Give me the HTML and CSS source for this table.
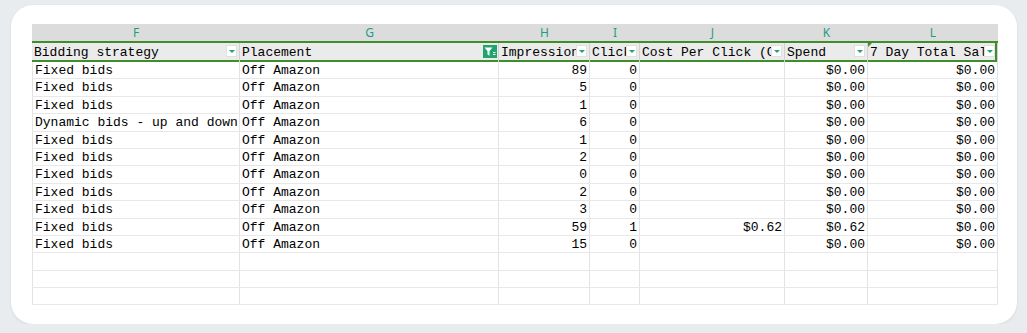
FILE: index.html
```html
<!doctype html>
<html>
<head>
    <meta charset="utf-8">
    <title>Sheet</title>
    <link rel="stylesheet" href="styles.css">
</head>
<body>

<div class="card">
    <div class="sheet">
        <div class="letters">
            <div>F</div><div>G</div><div>H</div><div>I</div><div>J</div><div>K</div><div>L</div>
        </div>

        <div class="head">
            <div class="hcell"><span>Bidding strategy</span><i class="drop"></i></div>
            <div class="hcell wide"><span>Placement</span><i class="filter">
                <svg width="14" height="13" viewBox="0 0 14 13"><path d="M1.5 2.5h8l-3 3.6v4.6l-2-1.1V6.1z" fill="#fff"/><path d="M10 7.5h2.5M10 9.5h2.5" stroke="#fff" stroke-width="1"/></svg>
            </i></div>
            <div class="hcell"><span>Impressions</span><i class="drop"></i></div>
            <div class="hcell"><span>Clicks</span><i class="drop"></i></div>
            <div class="hcell"><span>Cost Per Click (CPC)</span><i class="drop"></i></div>
            <div class="hcell"><span>Spend</span><i class="drop"></i></div>
            <div class="hcell sel"><span>7 Day Total Sales</span><i class="drop"></i></div>
        </div>

        <div class="rows">
            <div class="row"><div>Fixed bids</div><div>Off Amazon</div><div class="num">89</div><div class="num">0</div><div class="num"></div><div class="num">$0.00</div><div class="num">$0.00</div></div>
            <div class="row"><div>Fixed bids</div><div>Off Amazon</div><div class="num">5</div><div class="num">0</div><div class="num"></div><div class="num">$0.00</div><div class="num">$0.00</div></div>
            <div class="row"><div>Fixed bids</div><div>Off Amazon</div><div class="num">1</div><div class="num">0</div><div class="num"></div><div class="num">$0.00</div><div class="num">$0.00</div></div>
            <div class="row"><div>Dynamic bids - up and down</div><div>Off Amazon</div><div class="num">6</div><div class="num">0</div><div class="num"></div><div class="num">$0.00</div><div class="num">$0.00</div></div>
            <div class="row"><div>Fixed bids</div><div>Off Amazon</div><div class="num">1</div><div class="num">0</div><div class="num"></div><div class="num">$0.00</div><div class="num">$0.00</div></div>
            <div class="row"><div>Fixed bids</div><div>Off Amazon</div><div class="num">2</div><div class="num">0</div><div class="num"></div><div class="num">$0.00</div><div class="num">$0.00</div></div>
            <div class="row"><div>Fixed bids</div><div>Off Amazon</div><div class="num">0</div><div class="num">0</div><div class="num"></div><div class="num">$0.00</div><div class="num">$0.00</div></div>
            <div class="row"><div>Fixed bids</div><div>Off Amazon</div><div class="num">2</div><div class="num">0</div><div class="num"></div><div class="num">$0.00</div><div class="num">$0.00</div></div>
            <div class="row"><div>Fixed bids</div><div>Off Amazon</div><div class="num">3</div><div class="num">0</div><div class="num"></div><div class="num">$0.00</div><div class="num">$0.00</div></div>
            <div class="row"><div>Fixed bids</div><div>Off Amazon</div><div class="num">59</div><div class="num">1</div><div class="num">$0.62</div><div class="num">$0.62</div><div class="num">$0.00</div></div>
            <div class="row"><div>Fixed bids</div><div>Off Amazon</div><div class="num">15</div><div class="num">0</div><div class="num"></div><div class="num">$0.00</div><div class="num">$0.00</div></div>
            <div class="row"><div></div><div></div><div></div><div></div><div></div><div></div><div></div></div>
            <div class="row"><div></div><div></div><div></div><div></div><div></div><div></div><div></div></div>
            <div class="row"><div></div><div></div><div></div><div></div><div></div><div></div><div></div></div>
        </div>
    </div>
</div>

</body>
</html>
```

FILE: styles.css
```css
body {
    margin: 0;
    background: #e9ecef;
    font-family: "Liberation Mono", monospace;
}

.card {
    margin: 5px 10px 0 11px;
    height: 300px;
    padding: 19px 0 0 21px;
    background: #fff;
    border-radius: 22px;
    box-shadow: 0 1px 3px rgba(0, 0, 0, 0.08);
}

.sheet {
    width: 966px;
}

.letters,
.head,
.row {
    display: grid;
    grid-template-columns: 208px 259px 91px 50px 145px 83px 130px;
}

.letters {
    height: 17px;
    background: #dcdcdc;
    font-family: "Noto Sans", sans-serif;
    font-size: 12px;
    line-height: 18px;
    color: #1c9c88;
    text-align: center;
}

.head {
    height: 17px;
    border-top: 2px solid #3f8e2c;
    border-bottom: 2px solid #3f8e2c;
    background: #ebebeb;
}

.hcell {
    position: relative;
    border-right: 1px solid #d2d2d2;
    padding: 0 13px 0 2px;
    font-size: 13px;
    line-height: 19px;
    color: #000;
}

.hcell.wide {
    padding-right: 16px;
}

.hcell span {
    display: block;
    overflow: hidden;
    white-space: nowrap;
}

.hcell.sel {
    box-shadow: inset -2px 0 0 #3f8e2c;
}

.hcell.sel:before {
    content: "";
    position: absolute;
    top: 0;
    left: 0;
    border-top: 4px solid #3f8e2c;
    border-right: 4px solid transparent;
}

.drop {
    position: absolute;
    right: 2px;
    top: 2px;
    width: 11px;
    height: 12px;
    background: #fff;
    border: 1px solid #e0e0e0;
    box-sizing: border-box;
}

.drop:after {
    content: "";
    position: absolute;
    left: 2px;
    top: 4px;
    border-left: 3px solid transparent;
    border-right: 3px solid transparent;
    border-top: 3px solid #21a27a;
}

.filter {
    position: absolute;
    right: 1px;
    top: 2px;
    width: 14px;
    height: 13px;
    background: #21a46e;
    display: flex;
}

.rows .row {
    height: 17.4px;
    box-sizing: border-box;
    border-bottom: 1px solid #e8e8e8;
}

.row div {
    overflow: hidden;
    white-space: nowrap;
    border-right: 1px solid #e3e3e3;
    padding: 0 2px;
    font-size: 13px;
    line-height: 18px;
    color: #000;
}

.row div:first-child {
    border-left: 1px solid #e3e3e3;
}

.row .num {
    text-align: right;
}
```
